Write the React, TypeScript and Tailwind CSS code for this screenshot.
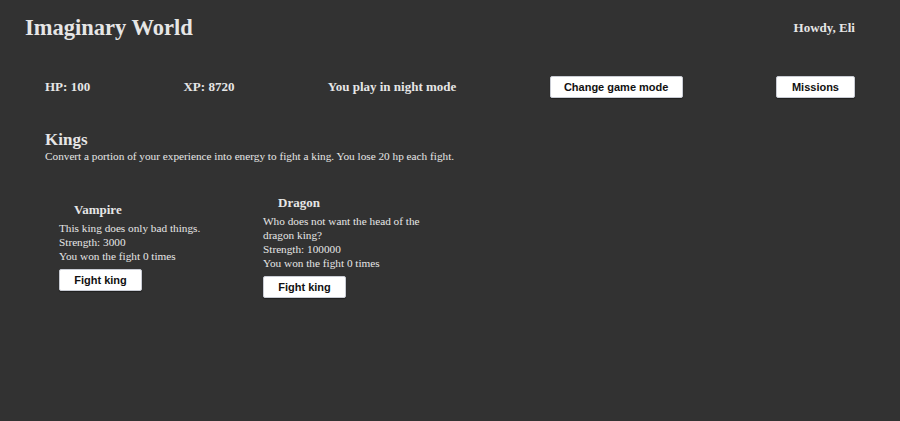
const kings = [
  {
    name: "Vampire",
    text: "This king does only bad things.",
    strength: 3000,
    won: 0,
  },
  {
    name: "Dragon",
    text: "Who does not want the head of the dragon king?",
    strength: 100000,
    won: 0,
  },
];

function GameButton({ label, className = "" }: { label: string; className?: string }) {
  return (
    <button
      type="button"
      className={`h-[22px] rounded-[2px] border border-[#c9ccd4] bg-white font-['Liberation_Sans',Arial,sans-serif] text-[11px] font-bold text-[#111] shadow-[0_1px_1px_rgba(0,0,0,0.4)] ${className}`}
    >
      {label}
    </button>
  );
}

function KingCard({ king }: { king: (typeof kings)[number] }) {
  return (
    <div className="w-[164px]">
      <h3 className="pl-[15px] text-[13px] font-bold leading-[16px]">{king.name}</h3>
      <div className="mt-[3px] text-[11.25px] leading-[14px]">
        <p>{king.text}</p>
        <p>Strength: {king.strength}</p>
        <p>You won the fight {king.won} times</p>
      </div>
      <GameButton label="Fight king" className="mt-[6px] w-[83px]" />
    </div>
  );
}

export default function App() {
  return (
    <div className="min-h-[421px] bg-[#323232] font-['Liberation_Serif','Times_New_Roman',serif] text-[#e6e6e6]">
      <header className="flex items-center justify-between pl-[25px] pr-[45px] pt-[14px]">
        <h1 className="text-[22.5px] font-bold leading-[28px]">Imaginary World</h1>
        <span className="text-[13px] font-bold">Howdy, Eli</span>
      </header>

      <div className="mt-[34px] flex items-center justify-between px-[45px] text-[13px] font-bold">
        <span>HP: 100</span>
        <span>XP: 8720</span>
        <span>You play in night mode</span>
        <GameButton label="Change game mode" className="w-[133px]" />
        <GameButton label="Missions" className="w-[79px]" />
      </div>

      <section className="mt-[32px] px-[45px]">
        <h2 className="text-[17px] font-bold leading-[19px]">Kings</h2>
        <p className="text-[11.25px] leading-[14px]">
          Convert a portion of your experience into energy to fight a king. You lose 20 hp each fight.
        </p>

        <div className="mt-[32px] flex items-center gap-[40px] pl-[14px]">
          {kings.map((king) => (
            <KingCard key={king.name} king={king} />
          ))}
        </div>
      </section>
    </div>
  );
}
